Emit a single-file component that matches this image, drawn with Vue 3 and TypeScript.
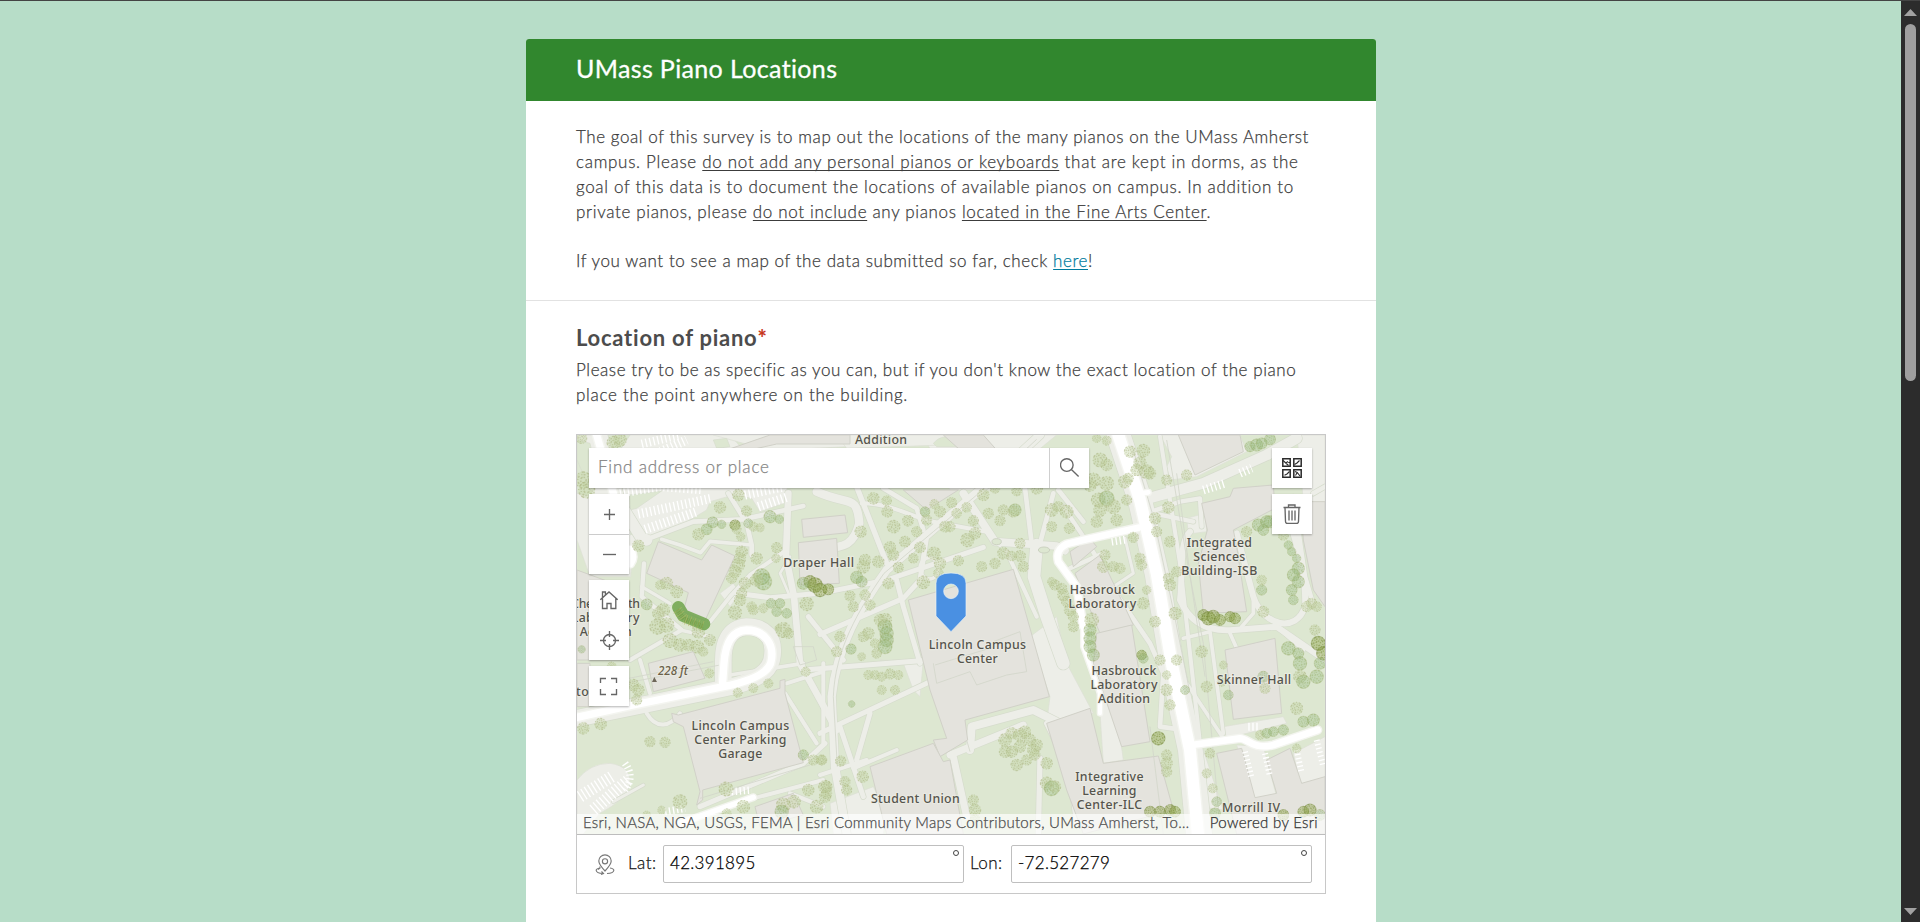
<script setup lang="ts">
interface MapLabel { x: number; y: number; w: number; text: string }
interface PathShape { d: string; w: number }

// Map geometry is drawn at three units per screen pixel.
const lots: string[] = [
  'M21 15H480L520 60L650 160L655 215L570 245L545 205L490 195L420 215L410 240L335 285L230 322L190 345L182 440H60L21 330Z',
  'M430 15H830V50L600 62Z', 'M1060 15H1460L1260 180H1140Z',
  'M1770 15H2010L2030 65L1880 140L1800 150L1790 110L1805 80Z',
  'M1380 620L1460 560L1490 700L1570 850L1430 880L1440 800Z',
  'M1560 690L1620 700L1660 990L1600 1000L1590 850Z',
  'M1960 890L2140 860L2150 880L1970 925Z', 'M1850 950L1900 960L1960 1140L1890 1130Z',
  'M2000 945L2080 950L2120 1100L2050 1105Z', 'M2170 970L2265 920V1050L2190 1065Z',
  'M21 1050Q60 1000 120 1000Q190 1010 178 1070Q165 1110 90 1150L40 1212H21Z',
  'M1850 265L1905 250L1910 305L1855 312Z', 'M800 15H1130L1120 45L830 55Z',
  'M780 1120L910 1070L950 1150L940 1212H790Z', 'M450 490L490 460L510 490L480 530Z',
  'M2180 15H2265V220L2200 215L2190 100Z', 'M930 690H1060L1050 800L1030 780L1000 700Z',
]
const lawns: string[] = [
  'M60 40L75 110L60 170L21 130V30Z', 'M110 15H180L150 60L125 70Z', 'M178 195L275 183L200 235L180 240Z', 'M430 30L470 25L480 50L440 55Z',
  'M1090 40Q1110 15 1150 20L1165 50H1100Z', 'M182 255L205 300L182 315Z', 'M21 90L70 200L21 190Z',
]
const walks: PathShape[] = [
  { d: 'M95 15L150 220L215 325L230 330', w: 34 }, { d: 'M230 328L370 275L520 268L700 228', w: 14 },
  { d: 'M275 328L330 345L392 368L420 334L545 345', w: 11 }, { d: 'M475 190L530 280L545 345V375', w: 14 },
  { d: 'M655 190L648 380L672 500L690 700L800 900', w: 20 }, { d: 'M650 360L540 435L480 500L420 575', w: 12 },
  { d: 'M500 490L600 503L750 490L950 450L1240 352', w: 15 }, { d: 'M222 400L215 500L335 600L180 690', w: 13 },
  { d: 'M215 470L300 520M330 600L420 620', w: 10 }, { d: 'M660 380L630 430L660 500', w: 8 },
  { d: 'M1410 15L1230 180L1100 290L950 420C870 530 800 650 785 800L795 1010L830 1212', w: 25 },
  { d: 'M860 170L950 400', w: 16 }, { d: 'M740 185C840 230 860 190 868 280C850 350 820 350 750 360', w: 25 },
  { d: 'M875 220C970 220 1040 268 1090 275L1250 305L1290 345', w: 12 }, { d: 'M940 175L1040 235L1060 300', w: 14 },
  { d: 'M1180 190L1275 335L1460 348L1485 362', w: 23 }, { d: 'M1365 175L1385 340M1450 190L1410 340M1465 180L1540 275', w: 14 },
  { d: 'M1400 345L1392 440L1430 560L1480 700', w: 38 }, { d: 'M1310 365L1400 560', w: 12 },
  { d: 'M750 613L1000 505L1050 450L1070 320', w: 15 }, { d: 'M980 450L1000 530L1050 700', w: 15 },
  { d: 'M715 560L820 690M700 720L1080 690M750 910L1080 755M810 890L880 1100M860 990L900 850', w: 15 },
  { d: 'M850 1015L980 960M750 1035L890 990', w: 12 }, { d: 'M1050 415a28 32 0 1 0 56 0a28 32 0 1 0-56 0', w: 10 },
  { d: 'M1200 960L1205 890L1390 840L1460 875', w: 24 }, { d: 'M1140 975L1360 885M1150 980L1190 1160', w: 21 },
  { d: 'M1430 880L1500 1020L1520 1180M1410 985L1405 1212', w: 16 },
  { d: 'M1480 230L1560 350L1590 400M1500 415L1600 370', w: 13 }, { d: 'M1665 325L1690 430L1630 470', w: 9 },
  { d: 'M1600 435L1740 640L1780 730L1770 890L1840 900', w: 14 },
  { d: 'M1735 205L1900 160L2090 75L2180 25', w: 32 }, { d: 'M1745 245L1830 215L1890 205L1895 290M1750 250L1870 275', w: 13 },
  { d: 'M1860 305C1825 340 1840 430 1830 510C1865 590 1930 605 1990 600L2120 590L2265 690', w: 18 },
  { d: 'M1840 625L1920 605L1960 910M1850 760L1960 925', w: 11 },
  { d: 'M2000 310L2050 500C2080 590 2180 610 2205 530Q2210 440 2170 310', w: 18 },
  { d: 'M2050 500V550L2015 590M1980 610L2000 655M2120 590L2200 660', w: 11 },
  { d: 'M2170 200L2205 440L2230 525M2230 190L2265 170', w: 14 },
  { d: 'M210 690L240 790M230 850C260 900 300 890 330 850', w: 12 },
  { d: 'M650 760L760 725M645 790L740 940M760 700V940', w: 12 }, { d: 'M390 1130L700 1000L765 940', w: 15 },
  { d: 'M550 1105L760 1050M660 1090L760 1130', w: 12 }, { d: 'M130 1115L220 1065', w: 9 },
  { d: 'M480 735L700 700', w: 11 }, { d: 'M1770 20L1830 400L1870 760L1920 1210', w: 12 },
]
const buildings: string[] = [
  'M265 335L395 390L425 345L495 378L405 572L340 545L355 488L230 430Z', 'M695 268L825 255L833 308L700 322Z',
  'M685 338L800 325L808 460L690 465Z', 'M21 420L170 475L165 690H21Z', 'M470 60L600 15H840V42H620L540 60Z',
  'M1000 180L1070 240L1165 180Z', 'M1120 15H1240L1280 60H1170Z',
  'M1015 510L1330 418L1438 800L1185 870L1193 930L1110 980L1090 930L1130 925L1080 780Z',
  'M900 1010L1090 940L1120 995L1140 990L1180 1212H950Z', 'M325 855L305 850L310 875L340 890L390 1085L380 1125L398 1110V1080L700 998L645 790V748L630 752V775Z',
  'M235 700L370 665L405 745L250 785Z', 'M555 1130L670 1090L700 1155L570 1190Z', 'M1825 15H2010L2020 65L1875 135Z',
  'M1895 220L1980 200L1990 175L2110 165L2115 235L1990 300L2000 350L2030 545L1900 550L1885 400L1912 300Z',
  'M2190 215H2265V530L2230 480L2200 330Z', 'M1515 430L1590 375L1690 585L1590 610Z',
  'M1580 610L1685 585L1740 935L1655 950L1570 700Z', 'M1430 880L1560 835L1600 1000L1765 978L1810 1140L1540 1212L1490 1080Z',
  'M1965 660L2115 625L2135 850L1990 868Z', 'M1940 970L2015 955L2055 1103L2120 1090L2090 990L2160 955L2195 1060L2265 1040V1212H2000Z',
  'M1500 365L1560 325L1580 350L1510 410Z', 'M21 700H60V830H21Z',
]
const roads: PathShape[] = [
  { d: 'M80 15L130 190', w: 22 }, { d: 'M180 360Q194 380 180 400', w: 24 },
  { d: 'M21 862L190 825L460 770Q585 745 602 700C618 640 580 600 530 600C485 602 466 640 462 700L457 770', w: 22 },
  { d: 'M1705 293L1540 330L1490 342Q1455 360 1465 395L1520 470L1540 590', w: 20 }, { d: 'M1540 590V650L1590 790V850', w: 12 },
  { d: 'M1645 15L1710 210L1760 430L1805 700L1860 960L1885 1225', w: 36 }, { d: 'M1710 190L1735 187', w: 14 },
  { d: 'M1865 945L2010 925C2035 925 2045 960 2110 945L2243 900', w: 20 }, { d: 'M330 1180L550 1102', w: 16 },
]
const stalls: PathShape[] = [
  { d: 'M215 42L330 15M150 190L270 170L400 180', w: 26 }, { d: 'M205 252L425 205M225 298L380 245', w: 28 },
  { d: 'M250 75L350 30M525 195L640 170M565 230L655 200', w: 28 }, { d: 'M30 1100L125 1040M70 1140L175 1050', w: 36 },
  { d: 'M165 1000Q195 1040 165 1080', w: 22 }, { d: 'M1900 180L1965 160M2010 130L2045 115', w: 26 },
  { d: 'M1625 335L1672 328M2035 890H2065', w: 24 }, { d: 'M2025 965L2045 1045M2085 970L2100 1040M2180 960L2195 1030M2240 930L2260 1010', w: 18 },
  { d: 'M485 1085L545 1080M285 1145L345 1135', w: 22 },
]
const details: string[] = [
  'M1400 28L1220 195L1090 305L942 430C865 540 795 660 790 800L802 1010', 'M1090 700L1100 760L1200 725L1220 765L1310 735L1370 725L1350 605L1270 635L1275 650L1095 705',
  'M1820 130L1865 470L1905 740', 'M1790 30L1858 430L1900 640L1950 1190', 'M1690 60L1750 260L1810 540L1860 790',
  'M100 760L430 695', 'M110 770L450 705', 'M670 650H730L740 690L690 705Z', 'M1200 965L1190 930', 'M1740 890L1780 1212', 'M390 1105L720 1005',
]

// x, y, radius, tone: 0 pale, 1 mid, 2 dense
const pack = `40,150,28,0 50,180,28,0 130,38,22,0 150,30,22,0 35,25,18,0 505,195,20,0 450,232,20,0 530,243,18,0 600,260,20,1 628,268,14,1
428,277,18,1 410,298,18,1 385,313,20,0 455,283,14,1 495,285,17,2 500,298,16,0 535,280,15,1 550,290,16,0 570,293,15,0 512,320,15,0 205,347,20,0
515,365,20,0 510,385,20,0 505,405,22,0 495,425,21,0 485,445,18,0 560,385,20,0 620,353,18,0 618,385,15,0 525,460,20,0 575,440,26,1 580,455,27,1 560,450,22,0
290,460,21,0 320,485,21,0 270,465,16,0 230,523,18,1 280,540,22,0 262,590,26,0 290,585,25,0 265,550,20,0 495,548,23,0 515,490,18,0 510,510,20,0 545,530,17,0
550,540,17,0 580,535,16,0 603,520,16,1 620,545,16,1 630,520,16,1 650,550,16,1 710,522,23,0 640,600,26,0 655,610,18,0 300,632,24,0 330,645,22,0 355,645,20,0 382,650,22,0
385,605,22,0 420,630,19,0 400,665,16,0 35,658,12,1 625,595,12,0 720,455,20,2 735,465,24,2 750,480,22,2 775,478,18,2 700,460,20,1 125,710,16,0 190,765,20,0 205,780,20,0 200,810,18,0
418,730,16,0 503,788,16,0 550,774,16,0 595,760,16,0 707,725,16,0 40,895,20,0 92,882,20,0 240,935,18,0 285,937,18,0 330,1115,24,0 468,1077,24,0 520,1130,22,0 700,975,17,1 730,990,18,0 755,990,18,0
640,1125,24,0 672,1115,22,0 635,1145,22,1 715,1080,20,0 740,1130,22,0 765,1070,22,0 275,1140,14,0 470,1150,16,0 230,1155,14,0 765,1100,20,0
910,205,20,0 950,212,17,0 952,245,19,0 1014,272,19,0 971,290,22,0 872,305,20,0 1093,222,16,0 1065,245,16,1 1110,245,19,0 1145,218,18,0 1160,250,17,0 1190,232,17,0 1210,272,18,0
1125,290,19,0 1140,290,18,0 1070,270,18,0 1040,305,18,0 1005,335,19,0 960,352,20,0 970,375,19,0 1050,352,19,0 1192,330,23,0 1215,310,20,0 1092,370,22,0 1165,392,18,0 1110,400,20,0 985,412,18,0
925,395,20,0 885,390,20,0 880,410,22,0 860,442,20,1 875,455,18,1 1030,385,17,0 1060,457,22,0 1105,430,17,0 955,460,19,0 840,498,18,0 885,495,18,0 850,530,18,0 900,525,18,0 1240,195,20,0 1255,250,18,0 1290,272,18,0
1300,240,18,0 1335,240,20,1 1330,245,19,0 1340,183,17,0 1400,175,20,0 1275,175,17,0 1300,370,20,0 1325,378,17,0 1350,340,18,0 1350,378,19,0 1360,410,18,0 1275,400,18,0 1235,410,18,0 1445,240,22,0
1465,230,18,0 1490,245,22,0 1445,290,18,0 1498,295,18,0 945,570,23,0 945,590,23,1 950,610,22,1 950,630,22,1 945,650,23,1 930,570,20,0 895,610,20,0 880,620,18,0 915,640,16,0 920,670,17,0 843,657,17,1 875,680,14,0
810,620,18,0 800,665,18,0 1445,455,15,0 1455,465,18,0 1475,475,18,0 1480,495,20,0 1490,515,18,0 1500,540,20,0 1510,560,18,0 1510,590,18,0
895,735,16,0 915,735,16,0 935,740,16,0 960,732,18,0 985,735,16,0 935,780,16,0 975,780,16,0 845,822,11,1 755,990,16,0 812,993,18,0 878,1040,20,0 825,1055,18,0 770,1070,19,0 830,1080,18,0 770,1090,18,0
1305,930,22,0 1325,910,20,0 1350,915,22,0 1365,905,20,0 1380,930,20,0 1400,945,20,0 1390,960,20,0 1350,950,20,0 1325,965,20,0 1305,965,20,0 1340,1005,20,0 1370,990,18,0 1395,975,18,0 1430,1000,20,0 1430,1060,22,0 1445,1075,24,1 1455,1070,20,0 1210,1110,18,0 1215,1140,20,0 1215,1165,16,0
1610,32,16,0 1580,25,15,0 1680,65,20,0 1720,62,22,0 1710,100,22,0 1700,120,20,0 1730,125,24,0 1740,130,20,0 1590,90,24,0 1610,105,20,0 1570,150,24,0 1560,165,22,0 1610,160,24,0 1665,155,22,0 1675,145,18,0
1585,210,24,0 1610,205,24,1 1630,230,24,0 1590,240,22,0 1580,275,20,0 1640,270,20,0 1790,150,18,0 1850,135,18,0 1795,232,20,0 1670,210,18,0 1755,265,20,0 1760,305,18,0 1800,335,19,0 1690,322,18,0 1605,375,18,0 1600,410,20,0 1630,410,18,0 1650,415,18,0
1710,385,18,0 1715,405,18,0 1820,425,18,0 1795,445,18,0 1800,465,20,0 1730,480,15,0 1720,520,20,0 1755,575,19,0 1815,550,21,0 1565,570,24,0 1820,690,18,0 1770,690,18,0 1895,665,20,0 1560,600,20,1 1560,625,20,1 1560,650,20,1 1570,675,20,1 1715,675,16,2 1720,685,16,1
1900,555,18,2 1915,565,22,2 1930,560,21,2 1950,570,18,2 1980,560,17,2 1995,565,18,2 2075,450,17,0 2075,480,17,1 2080,545,19,0 2040,50,17,1 2060,45,20,1 2075,40,18,1 2100,28,18,1 2140,315,18,0 2155,345,14,1 2165,365,14,1 2180,385,14,1 2185,415,20,1 2170,435,20,1 2185,455,20,1 2165,480,18,1 2170,510,16,1 2030,305,18,0 2065,285,20,1 2080,300,18,1 2100,275,20,1
2090,275,20,1 2225,520,18,0 2210,530,18,0 2240,530,17,0 2235,600,18,0 2245,640,23,2 2155,655,22,1 2185,670,18,1 2260,670,22,2 2190,700,22,1 2250,700,19,1 2190,740,22,0 2200,755,22,1 2240,740,22,1 2180,835,21,0 2080,740,18,1 2085,775,18,0 1960,705,14,0 1975,795,16,1 1910,770,19,0 1845,780,15,1 1790,735,15,0 1790,780,20,0 1800,825,18,0 1765,925,22,2
1790,975,18,0 1790,1000,20,0 1790,1025,18,0 1920,970,17,0 1910,1030,16,0 1928,1075,16,0 1940,1115,16,1 1935,1150,18,1 2070,915,16,0 2090,910,16,1 2110,905,16,1 2140,900,17,1 2200,875,18,1 2230,870,20,1 1740,1145,18,2 1770,1145,18,2 1800,1140,18,2 1815,1145,18,2 2140,1155,18,2 2200,1145,18,2 2220,1140,20,2 2250,1155,18,1 1955,755,16,0 2180,955,15,0`
const trees = pack.trim().split(/\s+/).map((t) => {
  const [x, y, r, tone] = t.split(',').map(Number)
  return { x, y, r, tone }
})

const labels: MapLabel[] = [
  { x: 933, y: 41, w: 156, text: 'Addition' }, { x: 746, y: 411, w: 212, text: 'Draper Hall' },
  { x: 107, y: 534, w: 206, text: 'Chem North' }, { x: 107, y: 576, w: 203, text: 'Laboratory' }, { x: 107, y: 618, w: 156, text: 'Addition' },
  { x: 1222, y: 657, w: 292, text: 'Lincoln Campus' }, { x: 1222, y: 700, w: 122, text: 'Center' },
  { x: 1948, y: 350, w: 196, text: 'Integrated' }, { x: 1948, y: 392, w: 156, text: 'Sciences' }, { x: 1948, y: 435, w: 228, text: 'Building-ISB' },
  { x: 1597, y: 492, w: 195, text: 'Hasbrouck' }, { x: 1597, y: 534, w: 203, text: 'Laboratory' },
  { x: 1662, y: 735, w: 195, text: 'Hasbrouck' }, { x: 1662, y: 777, w: 201, text: 'Laboratory' }, { x: 1662, y: 820, w: 156, text: 'Addition' },
  { x: 2052, y: 762, w: 223, text: 'Skinner Hall' }, { x: 511, y: 899, w: 293, text: 'Lincoln Campus' },
  { x: 511, y: 942, w: 276, text: 'Center Parking' }, { x: 511, y: 984, w: 132, text: 'Garage' },
  { x: 1036, y: 1118, w: 266, text: 'Student Union' }, { x: 1618, y: 1052, w: 205, text: 'Integrative' },
  { x: 1618, y: 1095, w: 163, text: 'Learning' }, { x: 1618, y: 1137, w: 196, text: 'Center-ILC' }, { x: 2043, y: 1145, w: 174, text: 'Morrill IV' },
]
</script>

<template>
  <div class="page">
    <main class="card">
      <header><h1>UMass Piano Locations</h1></header>
      <section class="intro">
        <p class="snug">The goal of this survey is to map out the locations of the many pianos on the UMass Amherst</p>
        <p class="loose">campus. Please <u>do not add any personal pianos or keyboards</u> that are kept in dorms, as the</p>
        <p>goal of this data is to document the locations of available pianos on campus. In addition to</p>
        <p>private pianos, please <u>do not include</u> any pianos <u>located in the Fine Arts Center</u>.</p>
        <p class="snug gap">If you want to see a map of the data submitted so far, check <a href="#">here</a>!</p>
      </section>
      <section class="question">
        <h2>Location of piano<b>*</b></h2>
        <p class="snug">Please try to be as specific as you can, but if you don't know the exact location of the piano</p>
        <p class="loose">place the point anywhere on the building.</p>
        <div class="frame">
          <div class="map">
            <svg class="canvas" viewBox="21 15 2244 1197">
              <rect x="21" y="15" width="2244" height="1197" fill="#dde7d1" />
              <path v-for="(d, i) in lots" :key="'l' + i" :d="d" class="lot" />
              <path v-for="(d, i) in lawns" :key="'g' + i" :d="d" class="lawn" />
              <path v-for="(p, i) in walks" :key="'c' + i" :d="p.d" :stroke-width="p.w + 4" class="line edge" />
              <path d="M21 865L460 775Q590 750 605 690C620 620 580 590 530 590C475 595 460 640 460 690V765" stroke-width="54" class="line edge" />
              <path d="M1645 15L1710 210L1760 430L1805 700L1860 960L1885 1225" stroke-width="76" class="line edge" />
              <path v-for="(p, i) in walks" :key="'w' + i" :d="p.d" :stroke-width="p.w" class="line walk" />
              <path d="M21 865L460 775Q590 750 605 690C620 620 580 590 530 590C475 595 460 640 460 690V765" stroke-width="50" class="line walk" />
              <path d="M1645 15L1710 210L1760 430L1805 700L1860 960L1885 1225" stroke-width="72" class="line walk" />
              <path v-for="(d, i) in buildings" :key="'b' + i" :d="d" class="building" />
              <path v-for="(d, i) in details" :key="'d' + i" :d="d" class="detail" />
              <path v-for="(p, i) in stalls" :key="'s' + i" :d="p.d" :stroke-width="p.w" class="stall" />
              <path v-for="(p, i) in roads" :key="'rc' + i" :d="p.d" :stroke-width="p.w + 8" class="line rim" />
              <path v-for="(p, i) in roads" :key="'r' + i" :d="p.d" :stroke-width="p.w" class="line road" />
              <g v-for="(t, i) in trees" :key="'t' + i" :class="'tree tone' + t.tone" :transform="`translate(${t.x} ${t.y}) rotate(${(i * 47) % 360}) scale(${t.r / 20})`">
                <circle r="18" class="leaf" />
                <circle r="17" stroke-dasharray="5 5 2 6 7 4" />
                <circle r="12" stroke-dasharray="4 5 2 3" />
                <circle r="6" stroke-dasharray="3 4 5 2" />
              </g>
              <path d="M325 532L340 557L402 582" class="line hedge" />
              <path d="M322 540L342 567L398 588" class="line hedge-dots" />
              <path d="M322 540L342 567L398 588" class="line hedge-dots fine" />
              <ellipse cx="1280" cy="335" rx="14" ry="9" class="isle" />
              <ellipse cx="1422" cy="360" rx="17" ry="9" class="isle" />
              <path d="M246 756L253 741L261 756Z" fill="#6e6759" />
              <text x="309" y="734" textLength="90" class="label elev">228 ft</text>
              <text x="36" y="797" textLength="76" class="label">ctor</text>
              <text v-for="l in labels" :key="l.text + l.y" :x="l.x" :y="l.y" :textLength="l.w" class="label">{{ l.text }}</text>
              <path fill-rule="evenodd" d="M1098 460Q1098 429 1143 429Q1188 429 1188 460V558L1143 605L1098 558ZM1143 462a22 22 0 1 0 0 44a22 22 0 1 0 0-44Z" fill="#4a90e2" stroke="#e9f1f7" stroke-width="2" />
            </svg>
            <div class="search">
              <span>Find address or place</span>
              <button><svg viewBox="0 0 20 20"><circle cx="6.8" cy="7" r="6.3" /><path d="M11.4 11.6L18.6 18.6" /></svg></button>
            </div>
            <div class="tools left">
              <div class="stack split">
                <button><svg viewBox="0 0 20 20"><path d="M10.5 5V16M5 10.5H16" /></svg></button>
                <button><svg viewBox="0 0 20 20"><path d="M4 9.5H17" /></svg></button>
              </div>
              <div class="stack">
                <button><svg viewBox="0 0 20 20"><path d="M1.3 9.8L10 2L18.7 9.8M3.5 8.5V18.5H8V13.5H12V18.5H16.8V8.2M3.5 7.5V2H6.4V5" /></svg></button>
                <button><svg viewBox="0 0 20 20"><circle cx="10.5" cy="10.5" r="6" /><path d="M10.5 1V7M10.5 14V20M1 10.5H7M14 10.5H20" /></svg></button>
              </div>
              <div class="stack">
                <button><svg viewBox="0 0 20 20"><path d="M1.5 7V2.5H7M12 2.5H17.5V7M17.5 13V18.5H12M7 18.5H1.5V13" /></svg></button>
              </div>
            </div>
            <div class="tools right">
              <div class="stack"><button>
                <svg viewBox="0 0 20 20" class="basemap"><path d="M.8 .8H8.2V8.2H.8ZM11.8 .8H19.2V8.2H11.8ZM.8 11.8H8.2V19.2H.8ZM11.8 11.8H19.2V19.2H11.8Z" /><path d="M1 2.5L3.8 5L6 3.5M3.8 5L6.5 7.5M6.3 4.5H8M12.5 6.5L15 5L17.5 2.5M2.5 17.2L5 16L7.5 13.5M13 13.5L15.2 14.5L18 18M15.2 14.5L13.5 17.5" class="fine" /></svg>
              </button></div>
              <div class="stack"><button>
                <svg viewBox="0 0 20 20"><path d="M1.5 3.5H18.5M6.5 3.5V1H13V3.5M3 3.5L3.5 17.5Q3.5 19.5 5.5 19.5H14.5Q16.5 19.5 16.5 17.5L17 3.5M7 6.5V16.5M10 6.5V16.5M13 6.5V16.5" /></svg>
              </button></div>
            </div>
            <div class="credits">
              <span class="sources">Esri, NASA, NGA, USGS, FEMA | Esri Community Maps Contributors, UMass Amherst, To…</span>
              <span class="powered">Powered by Esri</span>
            </div>
          </div>
          <div class="coords">
            <svg viewBox="0 0 20 20" class="pin"><path d="M10 16.5Q3.8 10 3.8 6.6A6.1 6.1 0 0 1 16.2 6.6Q16.2 10 10 16.5Z" /><circle cx="10" cy="6.8" r="2.6" /><path d="M5 13.5Q1 14.2 1.2 16Q1.5 18.6 8 19M6.5 17L8.5 19L6 20M15 13.5Q19 14.2 18.8 16Q18.5 18.6 12 19M4.8 12L5 13.5L3 15" /></svg>
            <label>Lat:</label><div class="field">42.391895<i /></div>
            <label class="lon">Lon:</label><div class="field">-72.527279<i /></div>
          </div>
        </div>
      </section>
    </main>
    <aside class="bar">
      <svg viewBox="0 0 19 922"><path d="M9.5 9L16 16H3ZM9.5 915L3 908H16Z" fill="#a2a2a2" /><rect x="4" y="24" width="11" height="357" rx="5.5" fill="#9f9f9f" /></svg>
    </aside>
  </div>
</template>

<style>
body { overflow: hidden; }
</style>

<style scoped>
* { box-sizing: border-box; }
.page { height: 922px; display: flex; justify-content: center; background: #b7ddc8; border-top: 1px solid #444; padding: 38px 18px 0 0; overflow: hidden; font-family: Lato, "Liberation Sans", sans-serif; color: #3c3c3c; font-size: 17px; font-weight: 300; -webkit-text-stroke: .25px currentColor; }
.card { width: 850px; height: 1100px; flex: none; background: #fff; border-radius: 3px 3px 0 0; overflow: hidden; }
header { height: 62px; background: #31872e; padding: 0 50px; }
h1 { margin: 0; color: #fff; font-size: 25px; font-weight: 400; line-height: 58px; letter-spacing: .36px; -webkit-text-stroke: .3px #fff; }
p { margin: 0; height: 25px; line-height: 25px; letter-spacing: .66px; white-space: nowrap; }
.snug { letter-spacing: .57px; }
.loose { letter-spacing: .7px; }
u, a { text-underline-offset: 2px; text-decoration-thickness: 1px; text-decoration-skip-ink: none; }
a { color: #007a9d; }
.intro { height: 200px; padding: 23px 50px 0; border-bottom: 1px solid #e2e2e2; }
.gap { margin-top: 24px; }
.question { padding: 20px 50px 0; }
h2 { margin: 0 0 3px; height: 33px; line-height: 33px; font-size: 22px; font-weight: 700; letter-spacing: .75px; color: #4c4c4c; white-space: nowrap; -webkit-text-stroke: 0; }
h2 b { color: #c7381e; }
.frame { margin-top: 27px; width: 750px; height: 460px; border: 1px solid #c8c8c8; }
.map { position: relative; height: 400px; border-bottom: 1px solid #bdbdbd; overflow: hidden; }
.canvas { display: block; width: 748px; height: 399px; }
.lot { fill: #edeee8; stroke: #dcdfd4; stroke-width: 2; }
.lawn { fill: #dde7d1; stroke: #d6dccd; stroke-width: 2; }
.line { fill: none; stroke-linejoin: round; stroke-linecap: round; }
.edge { stroke: #d6dccd; }
.walk { stroke: #edeee8; }
.rim { stroke: #f4f5f0; }
.road { stroke: #fff; }
.building { fill: #e4e3dd; stroke: #d1d1c8; stroke-width: 3; }
.detail { fill: none; stroke: #d3d6ca; stroke-width: 2.5; }
.stall { fill: none; stroke: #fff; stroke-dasharray: 4 8; }
.tree circle { fill: none; stroke: #a8b07c; stroke-width: 3.2; opacity: .5; }
.tree .leaf { fill: #c3d4a3; stroke: none; opacity: .4; }
.tree.tone1 .leaf { fill: #96ba80; opacity: .35; }
.tree.tone2 .leaf { fill: #93a850; opacity: .45; }
.tree.tone1 circle { stroke: #91a962; opacity: .4; }
.tree.tone2 circle { stroke: #758a35; }
.hedge { stroke: #6fa34b; stroke-width: 38; opacity: .85; }
.hedge-dots { stroke: #b8b765; stroke-width: 30; stroke-dasharray: 3 5 1 4; stroke-linecap: butt; opacity: .6; }
.hedge-dots.fine { stroke: #72963c; stroke-width: 14; stroke-dasharray: 2 4 3 3; }
.isle { fill: #dde7d1; stroke: #ccd2c1; stroke-width: 3; }
.label { font: 500 37px "Noto Sans", sans-serif; fill: #55544c; text-anchor: middle; -webkit-text-stroke: 0; stroke: rgba(238,238,230,.6); stroke-width: 7px; stroke-linejoin: round; paint-order: stroke; }
.elev { font-style: italic; font-size: 35px; fill: #6b6149; }
button { display: flex; align-items: center; justify-content: center; width: 40px; height: 40px; border: 0; padding: 0; background: #fff; }
button svg { width: 20px; height: 20px; fill: none; stroke: #666; stroke-width: 1.35; }
.search { position: absolute; left: 12px; top: 13px; width: 500px; height: 40px; display: flex; justify-content: space-between; background: #fff; box-shadow: 0 1px 2px rgba(0,0,0,.3); }
.search span { padding-left: 9px; line-height: 38px; letter-spacing: .8px; color: #858585; }
.search button { border-left: 1px solid #cfcfcf; }
.tools { position: absolute; top: 59px; display: flex; flex-direction: column; gap: 6px; }
.left { left: 12px; }
.right { left: 695px; top: 13px; }
.stack { box-shadow: 0 1px 2px rgba(0,0,0,.3); }
.split button + button { border-top: 1px solid #ccc; }
button svg.basemap { stroke: #2b2b2b; stroke-width: 1.5; }
.basemap .fine { stroke-width: 1.1; }
.credits { position: absolute; left: 0; right: 0; bottom: 0; height: 20px; display: flex; justify-content: space-between; padding: 0 7px 0 6px; background: rgba(255,255,255,.68); font-size: 15px; line-height: 17px; letter-spacing: .3px; white-space: nowrap; color: #323232; }
.sources { color: #4c4c4c; letter-spacing: .27px; }
.coords { height: 58px; display: flex; align-items: center; padding-left: 18px; color: #111; font-size: 17px; }
.pin { width: 20px; height: 21px; fill: none; stroke: #777; stroke-width: 1.15; overflow: visible; }
label { width: 34px; margin-left: 13px; margin-right: 1px; line-height: 30px; padding-bottom: 2px; letter-spacing: .5px; }
.lon { width: 40px; margin-left: 6px; }
.field { position: relative; width: 301px; height: 38px; border: 1px solid #bfbfbf; border-radius: 2px; line-height: 34px; padding-left: 6px; letter-spacing: .3px; color: #000; }
.field i { position: absolute; right: 4px; top: 4px; width: 6px; height: 6px; border: 1px solid #444; border-radius: 50%; }
.bar { position: absolute; right: 0; top: 0; width: 19px; height: 922px; background: #2c2c2c; border-top: 1px solid #444; }
.bar svg { display: block; width: 19px; height: 922px; margin-top: -1px; }
</style>
